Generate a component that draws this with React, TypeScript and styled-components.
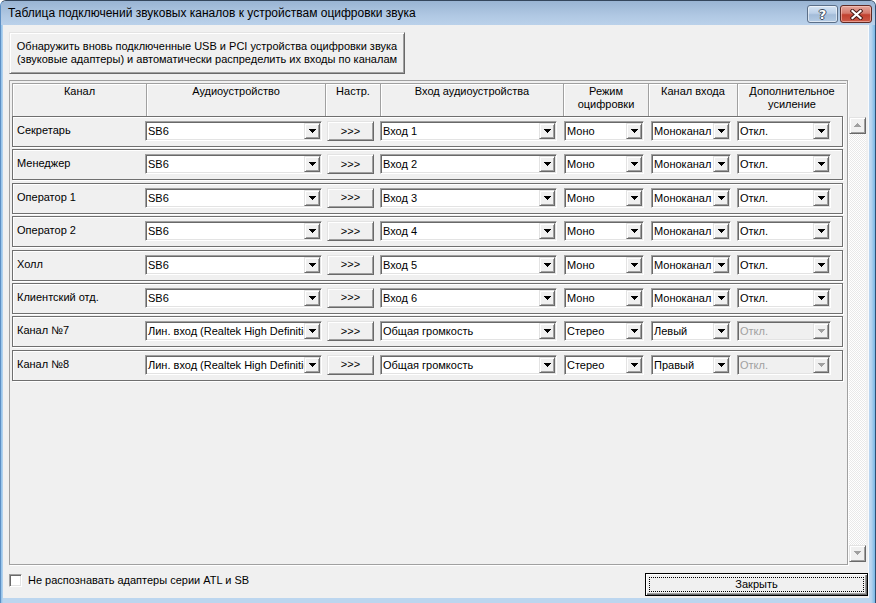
import React from "react";
import styled, { createGlobalStyle } from "styled-components";

const GlobalStyle = createGlobalStyle`
  html, body {
    margin: 0;
    padding: 0;
    background: #fff;
  }
  body {
    font-family: "Liberation Sans", Arial, sans-serif;
    font-size: 11px;
    color: #000;
  }
`;

// window chrome
const Window = styled.div`
  width: 876px;
  height: 603px;
  box-sizing: border-box;
  display: flex;
  flex-direction: column;
  border-top: 1px solid #34465c;
  border-right: 1px solid #2f4f72;
  border-left: 1px solid #5d8fc4;
  border-radius: 6px 6px 0 0;
  background: #a9cdec;
  overflow: hidden;
`;

const TitleBar = styled.div`
  height: 24px;
  flex-shrink: 0;
  display: flex;
  align-items: flex-start;
  padding: 0 3px 0 7px;
  background: linear-gradient(#99b4d3, #b0c8e3 60%, #bad1ea);
`;

const Caption = styled.div`
  flex: 1;
  font-family: "Liberation Sans", Arial, sans-serif;
  font-size: 12px;
  line-height: 24px;
  color: #000;
  white-space: nowrap;
`;

const CaptionButtons = styled.div`
  display: flex;
  gap: 2px;
  padding-top: 4px;
`;

const CaptionButton = styled.div<{ $close?: boolean; $w: number }>`
  width: ${(p) => p.$w}px;
  height: 18px;
  box-sizing: border-box;
  border-radius: 3px;
  border: 1px solid ${(p) => (p.$close ? "#5e2a25" : "#5b6f88")};
  box-shadow: inset 0 0 0 1px ${(p) => (p.$close ? "rgba(255,210,200,0.55)" : "rgba(255,255,255,0.55)")};
  background: ${(p) =>
    p.$close
      ? "linear-gradient(#e4a69c, #d47a6c 45%, #c1412f 55%, #cc5a47)"
      : "linear-gradient(#d6e4f3, #bcd0e8 45%, #a3bcd9 55%, #b4cbe4)"};
  display: flex;
  align-items: center;
  justify-content: center;
`;

const HelpGlyph = styled.span`
  font-family: "DejaVu Sans", sans-serif;
  font-weight: bold;
  font-size: 13px;
  line-height: 13px;
  color: #fff;
  text-shadow: -1px 0 #3d4a5c, 1px 0 #3d4a5c, 0 -1px #3d4a5c, 0 1px #3d4a5c;
`;

const Frame = styled.div`
  flex: 1;
  display: flex;
  padding: 0 6px 5px 2px;
  background: linear-gradient(90deg, #8cc0ea, #bcd6ef 2px, #bcd6ef calc(100% - 4px), #7ab8e6);
`;

const Client = styled.div`
  flex: 1;
  display: flex;
  flex-direction: column;
  background: #f0f0f0;
  padding: 7px 0 2px 6px;
  border-right: 1px solid #f8fbfe;
`;

// classic 3d button
const RaisedButton = styled.div<{ $w: number; $h: number }>`
  width: ${(p) => p.$w}px;
  height: ${(p) => p.$h}px;
  box-sizing: border-box;
  flex-shrink: 0;
  background: #f0f0f0;
  border: 1px solid;
  border-color: #e3e3e3 #696969 #696969 #e3e3e3;
  box-shadow: inset 1px 1px 0 #fff, inset -1px -1px 0 #a0a0a0;
  display: flex;
  align-items: center;
  justify-content: center;
  text-align: center;
  line-height: 13px;
  white-space: nowrap;
`;

const ScanButton = styled(RaisedButton)`
  padding-bottom: 1px;
`;

const TableRow = styled.div`
  display: flex;
  align-items: flex-start;
  margin-top: 6px;
`;

const Panel = styled.div`
  width: 839px;
  height: 485px;
  box-sizing: border-box;
  border: 1px solid #a0a0a0;
  box-shadow: 1px 1px 0 #fff;
  padding: 2px 0 0 2px;
`;

const Header = styled.div`
  display: flex;
  height: 33px;
`;

const HeaderCell = styled.div<{ $w: number }>`
  width: ${(p) => p.$w}px;
  box-sizing: border-box;
  border-top: 1px solid #a0a0a0;
  border-left: 1px solid #a0a0a0;
  box-shadow: inset 1px 1px 0 #fff;
  padding-top: 1px;
  text-align: center;
  line-height: 13px;
`;

const Rows = styled.div`
  display: flex;
  flex-direction: column;
  gap: 2.4px;
`;

const ChannelRow = styled.div`
  width: 831px;
  height: 31px;
  box-sizing: border-box;
  border: 1px solid #6f6f6f;
  box-shadow: inset 1px 1px 0 #fff, 1px 1px 0 #fff;
  display: flex;
  align-items: flex-start;
  padding-top: 4px;
`;

const ChannelName = styled.div`
  width: 132px;
  padding: 3px 0 0 4px;
  box-sizing: border-box;
  line-height: 13px;
  white-space: nowrap;
`;

const Spacer = styled.div<{ $w: number }>`
  width: ${(p) => p.$w}px;
  flex-shrink: 0;
`;

const Combo = styled.div<{ $w: number; $off?: boolean }>`
  width: ${(p) => p.$w}px;
  height: 20px;
  box-sizing: border-box;
  flex-shrink: 0;
  display: flex;
  border: 1px solid;
  border-color: #a0a0a0 #fff #fff #a0a0a0;
  box-shadow: inset 1px 1px 0 #696969, inset -1px -1px 0 #e3e3e3;
  padding: 1px;
  background: ${(p) => (p.$off ? "#f0f0f0" : "#fff")};
  color: ${(p) => (p.$off ? "#a0a0a0" : "#000")};
`;

const ComboText = styled.div`
  flex: 1;
  min-width: 0;
  overflow: hidden;
  white-space: nowrap;
  padding-left: 1px;
  line-height: 16px;
`;

const DropButton = styled.div`
  width: 16px;
  height: 16px;
  box-sizing: border-box;
  flex-shrink: 0;
  background: #f0f0f0;
  border: 1px solid;
  border-color: #e3e3e3 #696969 #696969 #e3e3e3;
  box-shadow: inset 1px 1px 0 #fff, inset -1px -1px 0 #a0a0a0;
  display: flex;
  align-items: center;
  justify-content: center;
`;

// scrollbar beside the panel
const ScrollBar = styled.div`
  width: 17px;
  height: 445px;
  margin: 37px 0 0 1px;
  display: flex;
  flex-direction: column;
  background: repeating-conic-gradient(#ffffff 0 25%, #e9e9e9 0 50%) 0 0 / 2px 2px;
`;

const ScrollArrow = styled(RaisedButton)`
  padding-bottom: 1px;
`;

const ScrollTrack = styled.div`
  flex: 1;
`;

const Footer = styled.div`
  display: flex;
  align-items: flex-start;
  justify-content: space-between;
  margin-top: 8px;
`;

const CheckLabel = styled.label`
  display: flex;
  align-items: center;
  gap: 6px;
  margin: 1px 0 0 0;
  line-height: 13px;
`;

const CheckBox = styled.span`
  width: 13px;
  height: 13px;
  box-sizing: border-box;
  border: 1px solid;
  border-color: #a0a0a0 #fff #fff #a0a0a0;
  box-shadow: inset 1px 1px 0 #696969, inset -1px -1px 0 #e3e3e3;
  background: #fff;
`;

const DefaultButton = styled.div`
  width: 223px;
  height: 23px;
  box-sizing: border-box;
  border: 1px solid #000;
  background: #f0f0f0;
  box-shadow: inset 1px 1px 0 #fff, inset -1px -1px 0 #696969, inset -2px -2px 0 #a0a0a0;
  padding: 3px;
  display: flex;
`;

const FocusRect = styled.div`
  flex: 1;
  border: 1px dotted #000;
  display: flex;
  align-items: center;
  justify-content: center;
  line-height: 13px;
`;

const Arrow = ({ up, color = "#000" }: { up?: boolean; color?: string }) => (
  <svg width="7" height="4" viewBox="0 0 7 4" shapeRendering="crispEdges" style={up ? { transform: "scaleY(-1)" } : undefined}>
    <path d="M0 0h7v1h-1v1h-1v1h-1v1h-1v-1h-1v-1h-1v-1h-1z" fill={color} />
  </svg>
);

const CloseGlyph = () => (
  <svg width="13" height="11" viewBox="0 0 13 11">
    <path d="M2.5 2 L10.5 9 M10.5 2 L2.5 9" stroke="#4a1c17" strokeWidth="4.2" strokeLinecap="square" />
    <path d="M2.5 2 L10.5 9 M10.5 2 L2.5 9" stroke="#fff" strokeWidth="2.2" strokeLinecap="square" />
  </svg>
);

const ComboBox = ({ w, text, off }: { w: number; text: string; off?: boolean }) => (
  <Combo $w={w} $off={off}>
    <ComboText>{text}</ComboText>
    <DropButton>
      <Arrow color={off ? "#a0a0a0" : "#000"} />
    </DropButton>
  </Combo>
);

const columns = [
  { w: 134, title: ["Канал"] },
  { w: 179, title: ["Аудиоустройство"] },
  { w: 55, title: ["Настр."] },
  { w: 183, title: ["Вход аудиоустройства"] },
  { w: 85, title: ["Режим", "оцифровки"] },
  { w: 89, title: ["Канал входа"] },
  { w: 109, title: ["Дополнительное", "усиление"] },
];

// the device name is wider than its box and is cut by the drop button
const lineIn = "Лин. вход (Realtek High Definitio";

const channels = [
  { name: "Секретарь", device: "SB6", input: "Вход 1", mode: "Моно", side: "Моноканал", gainOff: false },
  { name: "Менеджер", device: "SB6", input: "Вход 2", mode: "Моно", side: "Моноканал", gainOff: false },
  { name: "Оператор 1", device: "SB6", input: "Вход 3", mode: "Моно", side: "Моноканал", gainOff: false },
  { name: "Оператор 2", device: "SB6", input: "Вход 4", mode: "Моно", side: "Моноканал", gainOff: false },
  { name: "Холл", device: "SB6", input: "Вход 5", mode: "Моно", side: "Моноканал", gainOff: false },
  { name: "Клиентский отд.", device: "SB6", input: "Вход 6", mode: "Моно", side: "Моноканал", gainOff: false },
  { name: "Канал №7", device: lineIn, input: "Общая громкость", mode: "Стерео", side: "Левый", gainOff: true },
  { name: "Канал №8", device: lineIn, input: "Общая громкость", mode: "Стерео", side: "Правый", gainOff: true },
];

const App = () => {
  return (
    <>
      <GlobalStyle />
      <Window>
        <TitleBar>
          <Caption>Таблица подключений звуковых каналов к устройствам оцифровки звука</Caption>
          <CaptionButtons>
            <CaptionButton $w={31}>
              <HelpGlyph>?</HelpGlyph>
            </CaptionButton>
            <CaptionButton $w={32} $close>
              <CloseGlyph />
            </CaptionButton>
          </CaptionButtons>
        </TitleBar>
        <Frame>
          <Client>
            <ScanButton $w={396} $h={42}>
              Обнаружить вновь подключенные USB и PCI устройства оцифровки звука
              <br />
              (звуковые адаптеры) и автоматически распределить их входы по каналам
            </ScanButton>

            <TableRow>
              <Panel>
                <Header>
                  {columns.map((c) => (
                    <HeaderCell key={c.title[0]} $w={c.w}>
                      {c.title.map((t) => (
                        <div key={t}>{t}</div>
                      ))}
                    </HeaderCell>
                  ))}
                </Header>
                <Rows>
                  {channels.map((ch) => (
                    <ChannelRow key={ch.name}>
                      <ChannelName>{ch.name}</ChannelName>
                      <ComboBox w={177} text={ch.device} />
                      <Spacer $w={5} />
                      <RaisedButton $w={47} $h={20}>&gt;&gt;&gt;</RaisedButton>
                      <Spacer $w={6} />
                      <ComboBox w={177} text={ch.input} />
                      <Spacer $w={7} />
                      <ComboBox w={80} text={ch.mode} />
                      <Spacer $w={7} />
                      <ComboBox w={80} text={ch.side} />
                      <Spacer $w={6} />
                      <ComboBox w={94} text="Откл." off={ch.gainOff} />
                    </ChannelRow>
                  ))}
                </Rows>
              </Panel>
              <ScrollBar>
                <ScrollArrow $w={17} $h={17}>
                  <Arrow up color="#a0a0a0" />
                </ScrollArrow>
                <ScrollTrack />
                <ScrollArrow $w={17} $h={17}>
                  <Arrow color="#a0a0a0" />
                </ScrollArrow>
              </ScrollBar>
            </TableRow>

            <Footer>
              <CheckLabel>
                <CheckBox />
                Не распознавать адаптеры серии ATL и SB
              </CheckLabel>
              <DefaultButton>
                <FocusRect>Закрыть</FocusRect>
              </DefaultButton>
            </Footer>
          </Client>
        </Frame>
      </Window>
    </>
  );
};

export default App;
